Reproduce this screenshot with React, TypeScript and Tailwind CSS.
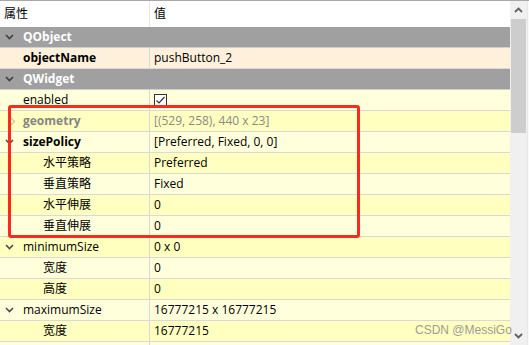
import React from "react";

const FONT = { fontFamily: '"Open Sans", "Noto Sans CJK SC", sans-serif' };

type Row =
  | { kind: "group"; label: string }
  | {
      kind: "prop";
      label: string;
      value?: string;
      check?: boolean;
      bold?: boolean;
      gray?: boolean;
      arrow?: "down" | "faint";
      indent?: boolean;
      bg: string;
    };

const L = "bg-[#ffffdc]";
const S = "bg-[#ffffbf]";

const rows: Row[] = [
  { kind: "group", label: "QObject" },
  { kind: "prop", label: "objectName", value: "pushButton_2", bold: true, bg: "bg-[#fff0dc]" },
  { kind: "group", label: "QWidget" },
  { kind: "prop", label: "enabled", check: true, bg: L },
  { kind: "prop", label: "geometry", value: "[(529, 258), 440 x 23]", bold: true, gray: true, arrow: "faint", bg: S },
  { kind: "prop", label: "sizePolicy", value: "[Preferred, Fixed, 0, 0]", bold: true, arrow: "down", bg: L },
  { kind: "prop", label: "水平策略", value: "Preferred", indent: true, bg: S },
  { kind: "prop", label: "垂直策略", value: "Fixed", indent: true, bg: L },
  { kind: "prop", label: "水平伸展", value: "0", indent: true, bg: S },
  { kind: "prop", label: "垂直伸展", value: "0", indent: true, bg: L },
  { kind: "prop", label: "minimumSize", value: "0 x 0", arrow: "down", bg: S },
  { kind: "prop", label: "宽度", value: "0", indent: true, bg: L },
  { kind: "prop", label: "高度", value: "0", indent: true, bg: S },
  { kind: "prop", label: "maximumSize", value: "16777215 x 16777215", arrow: "down", bg: L },
  { kind: "prop", label: "宽度", value: "16777215", indent: true, bg: S },
  { kind: "prop", label: "", value: "", indent: true, bg: L },
];

function ChevronDown({ color }: { color: string }) {
  return (
    <svg width="9" height="6" viewBox="0 0 9 6" className="block">
      <path d="M1 1 L4.5 4.5 L8 1" fill="none" stroke={color} strokeWidth="1.6" />
    </svg>
  );
}

function ChevronRight() {
  return (
    <svg width="6" height="9" viewBox="0 0 6 9" className="block">
      <path d="M1 1 L4.5 4.5 L1 8" fill="none" stroke="#c8c8b0" strokeWidth="1.4" />
    </svg>
  );
}

function Check() {
  return (
    <svg width="13" height="13" viewBox="0 0 13 13" className="block">
      <rect x="0.5" y="0.5" width="12" height="12" fill="#ffffff" stroke="#333333" />
      <path d="M2.5 6.5 L5 9 L10.5 3" fill="none" stroke="#333333" strokeWidth="1.2" />
    </svg>
  );
}

function RowView({ r }: { r: Row }) {
  if (r.kind === "group") {
    return (
      <div className="h-[21px] shrink-0 flex items-center bg-[#a0a0a0] border-b border-[#cfcfcf]">
        <div className="w-[23px] pl-[5px] flex items-center">
          <ChevronDown color="#3e3e3e" />
        </div>
        <span className="text-[12px] font-bold text-white leading-none">{r.label}</span>
      </div>
    );
  }
  return (
    <div className={`h-[21px] shrink-0 flex border-b border-[#d9d9d9] ${r.bg}`}>
      <div className="w-[150px] shrink-0 flex items-center border-r border-[#d9d9d9] pl-[5px]">
        {r.indent && <div className="w-[20px] shrink-0" />}
        <div className="w-[18px] shrink-0 flex items-center">
          {r.arrow === "down" && <ChevronDown color="#4a4a4a" />}
          {r.arrow === "faint" && (
            <div className="pl-[5px]">
              <ChevronRight />
            </div>
          )}
        </div>
        <span
          className={`text-[12px] leading-none whitespace-nowrap ${r.bold ? "font-bold" : ""} ${
            r.gray ? "text-[#858585]" : "text-black"
          }`}
        >
          {r.label}
        </span>
      </div>
      <div className="flex-1 flex items-center pl-[4px]">
        {r.check ? (
          <Check />
        ) : (
          <span className={`text-[12px] leading-none whitespace-nowrap ${r.gray ? "text-[#8a8a8a]" : "text-black"}`}>
            {r.value}
          </span>
        )}
      </div>
    </div>
  );
}

export default function App() {
  return (
    <div className="relative w-[529px] h-[345px] overflow-hidden bg-white border-t border-[#a8a8a8] flex" style={FONT}>
      <div className="w-[510px] shrink-0 flex flex-col">
        <div className="h-[26px] shrink-0 flex bg-white">
          <div className="w-[150px] shrink-0 flex items-center pl-[4px] border-r border-[#e5e5e5]">
            <span className="text-[12px] text-black leading-none">属性</span>
          </div>
          <div className="flex-1 flex items-center pl-[4px]">
            <span className="text-[12px] text-black leading-none">值</span>
          </div>
        </div>
        {rows.map((r, i) => (
          <RowView key={i} r={r} />
        ))}
      </div>
      <div className="w-[17px] shrink-0 bg-[#f0f0f0] flex flex-col">
        <div className="h-[18px] shrink-0 flex items-center justify-center">
          <svg width="9" height="6" viewBox="0 0 9 6" className="block">
            <path d="M1 5 L4.5 1.5 L8 5" fill="none" stroke="#606060" strokeWidth="1.8" />
          </svg>
        </div>
        <div className="mx-[1px] h-[114px] shrink-0 bg-[#cdcdcd]" />
        <div className="flex-1" />
        <div className="h-[14px] shrink-0 flex items-start justify-center pt-[2px]">
          <svg width="9" height="6" viewBox="0 0 9 6" className="block">
            <path d="M1 1 L4.5 4.5 L8 1" fill="none" stroke="#606060" strokeWidth="1.8" />
          </svg>
        </div>
      </div>
      <div className="w-[2px] shrink-0 bg-[#fafafa] border-l border-[#e8e8e8]" />

      <div className="absolute left-[8px] top-[104px] w-[352px] h-[133px] border-[3px] border-[#fc2a1c] rounded-[3px] pointer-events-none" />

      <div
        className="absolute left-[415px] top-[322px] text-[12px] leading-[14px] text-[#9c9c9c] whitespace-nowrap"
        style={{ fontFamily: '"Liberation Sans", sans-serif' }}
      >
        CSDN @MessiGo
      </div>
    </div>
  );
}
